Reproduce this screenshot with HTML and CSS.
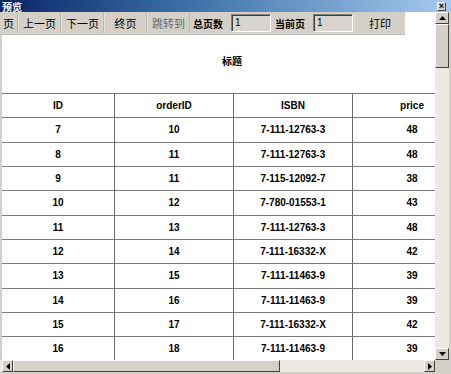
FILE: index.html
```html
<!DOCTYPE html>
<html>
<head>
<meta charset="utf-8">
<link rel="stylesheet" href="styles.css">
</head>
<body>
<div class="win">
  <div class="titlebar">
    <span class="title">预览</span>
    <span class="close">×</span>
  </div>
  <div class="middle">
    <div class="viewport">
      <div class="toolbar">
        <span class="btn b0">页</span>
        <span class="btn b1">上一页</span>
        <span class="btn b1">下一页</span>
        <span class="btn b2">终页</span>
        <span class="btn b1 dis">跳转到</span>
        <span class="lbl">总页数</span>
        <span class="field">1</span>
        <span class="lbl">当前页</span>
        <span class="field">1</span>
        <span class="btn b3">打印</span>
      </div>
      <div class="page">
        <div class="heading">标题</div>
        <table class="grid">
          <tr><td class="c0">ID</td><td>orderID</td><td>ISBN</td><td>price</td></tr>
          <tr><td class="c0">7</td><td>10</td><td>7-111-12763-3</td><td>48</td></tr>
          <tr><td class="c0">8</td><td>11</td><td>7-111-12763-3</td><td>48</td></tr>
          <tr><td class="c0">9</td><td>11</td><td>7-115-12092-7</td><td>38</td></tr>
          <tr><td class="c0">10</td><td>12</td><td>7-780-01553-1</td><td>43</td></tr>
          <tr><td class="c0">11</td><td>13</td><td>7-111-12763-3</td><td>48</td></tr>
          <tr><td class="c0">12</td><td>14</td><td>7-111-16332-X</td><td>42</td></tr>
          <tr><td class="c0">13</td><td>15</td><td>7-111-11463-9</td><td>39</td></tr>
          <tr><td class="c0">14</td><td>16</td><td>7-111-11463-9</td><td>39</td></tr>
          <tr><td class="c0">15</td><td>17</td><td>7-111-16332-X</td><td>42</td></tr>
          <tr><td class="c0">16</td><td>18</td><td>7-111-11463-9</td><td>39</td></tr>
        </table>
      </div>
    </div>
    <div class="vscroll">
      <span class="arrow"><svg width="7" height="4" viewBox="0 0 7 4"><path d="M3.5 0 L7 4 L0 4 Z" fill="#000"/></svg></span>
      <span class="vthumb"></span>
      <span class="vtrack"></span>
      <span class="arrow"><svg width="7" height="4" viewBox="0 0 7 4"><path d="M0 0 L7 0 L3.5 4 Z" fill="#000"/></svg></span>
    </div>
  </div>
  <div class="hscroll">
    <span class="arrow h"><svg width="4" height="7" viewBox="0 0 4 7"><path d="M4 0 L4 7 L0 3.5 Z" fill="#000"/></svg></span>
    <span class="hthumb"></span>
    <span class="htrack"></span>
    <span class="arrow h"><svg width="4" height="7" viewBox="0 0 4 7"><path d="M0 0 L4 3.5 L0 7 Z" fill="#000"/></svg></span>
    <span class="corner"></span>
  </div>
</div>
</body>
</html>
```

FILE: styles.css
```css
html, body { margin: 0; padding: 0; }
body { width: 451px; height: 374px; overflow: hidden; background: #d4d0c8; }
.win {
  width: 451px; height: 374px; display: flex; flex-direction: column;
  background: #d4d0c8; font-family: "Noto Sans CJK SC", "Liberation Sans", sans-serif;
}
.titlebar {
  height: 12px; flex: none; display: flex; align-items: center; justify-content: space-between;
  background: linear-gradient(to right, #0a246a 0%, #3a6ea5 40%, #a6caf0 100%);
  padding: 0 5px 0 2px;
}
.title { display: block; color: #fff; font-weight: bold; font-size: 10px; line-height: 11px; height: 11px; }
.close {
  width: 9px; height: 9px; background: #d4d0c8; border-top: 1px solid #fff; border-left: 1px solid #fff;
  border-right: 1px solid #404040; border-bottom: 1px solid #404040; box-sizing: border-box;
  font-family: "Liberation Sans", sans-serif; font-weight: bold; font-size: 9px; line-height: 6px;
  text-align: center; color: #000; overflow: hidden;
}
.middle { flex: none; height: 348px; display: flex; padding-right: 2px; }
.viewport { flex: 1; min-width: 0; overflow: hidden; background: #fff; display: flex; flex-direction: column; }
.toolbar {
  flex: none; width: 405px; height: 22px; background: #d4d0c8; display: flex; align-items: stretch;
  font-size: 11px; color: #000; border-bottom: 1px solid #c0c0c0;
}
.btn {
  display: flex; align-items: center; justify-content: center; box-sizing: border-box;
  border-right: 1px solid #bcb8b0; border-left: 1px solid #e0ded8; margin: 1px 0;
}
.b0 { width: 18px; border-left: none; }
.b1 { width: 43px; }
.b2 { width: 43px; }
.b3 { flex: 1; border-right: none; }
.dis { color: #6a6a6a; }
.lbl { display: flex; align-items: center; font-weight: bold; font-size: 10px; padding: 0 8px 0 3px; }
.field {
  width: 40px; height: 18px; margin-top: 2px; box-sizing: border-box; background: #d8d5ce;
  border-top: 1px solid #808080; border-left: 1px solid #808080;
  border-right: 1px solid #fff; border-bottom: 1px solid #fff;
  box-shadow: inset 1px 1px 0 #404040;
  font-family: "Liberation Sans", sans-serif; font-size: 10px; line-height: 16px; padding-left: 3px;
  margin-right: 1px;
}
.page { flex: 1; border-left: 2px solid #d4d0c8; }
.heading { width: 460px; text-align: center; font-weight: bold; font-size: 10px; line-height: 14px; padding-top: 19px; height: 14px; margin-bottom: 25px; }
.grid {
  border-collapse: collapse; table-layout: fixed; width: 469px;
  font-family: "Liberation Sans", sans-serif; font-weight: bold; font-size: 10px; color: #000;
}
.grid td {
  width: 118px; height: 23.33px; padding: 0; text-align: center;
  border-top: 1px solid #7a7a7a; border-left: 1px solid #6a6a6a;
}
.grid td.c0 { width: 112px; border-left: none; }
.vscroll { width: 14px; flex: none; display: flex; flex-direction: column; background: #ece9e2; }
.arrow {
  flex: none; width: 14px; height: 12px; box-sizing: border-box; background: #d4d0c8;
  border-top: 1px solid #fff; border-left: 1px solid #fff;
  border-right: 1px solid #404040; border-bottom: 1px solid #404040;
  display: flex; align-items: center; justify-content: center;
}
.vthumb {
  flex: none; height: 44px; box-sizing: border-box; background: #d4d0c8;
  border-top: 1px solid #fff; border-left: 1px solid #fff;
  border-right: 1px solid #404040; border-bottom: 1px solid #404040;
}
.vtrack { flex: 1; }
.hscroll { flex: none; height: 12px; display: flex; padding-left: 2px; background: #ece9e2; border-bottom: 2px solid #d4d0c8; }
.arrow.h { width: 11px; height: 12px; }
.hthumb {
  flex: none; width: 267px; box-sizing: border-box; background: #d4d0c8;
  border-top: 1px solid #fff; border-left: 1px solid #fff;
  border-right: 1px solid #404040; border-bottom: 1px solid #404040;
}
.htrack { flex: 1; }
.corner { flex: none; width: 16px; background: #d4d0c8; }
```
